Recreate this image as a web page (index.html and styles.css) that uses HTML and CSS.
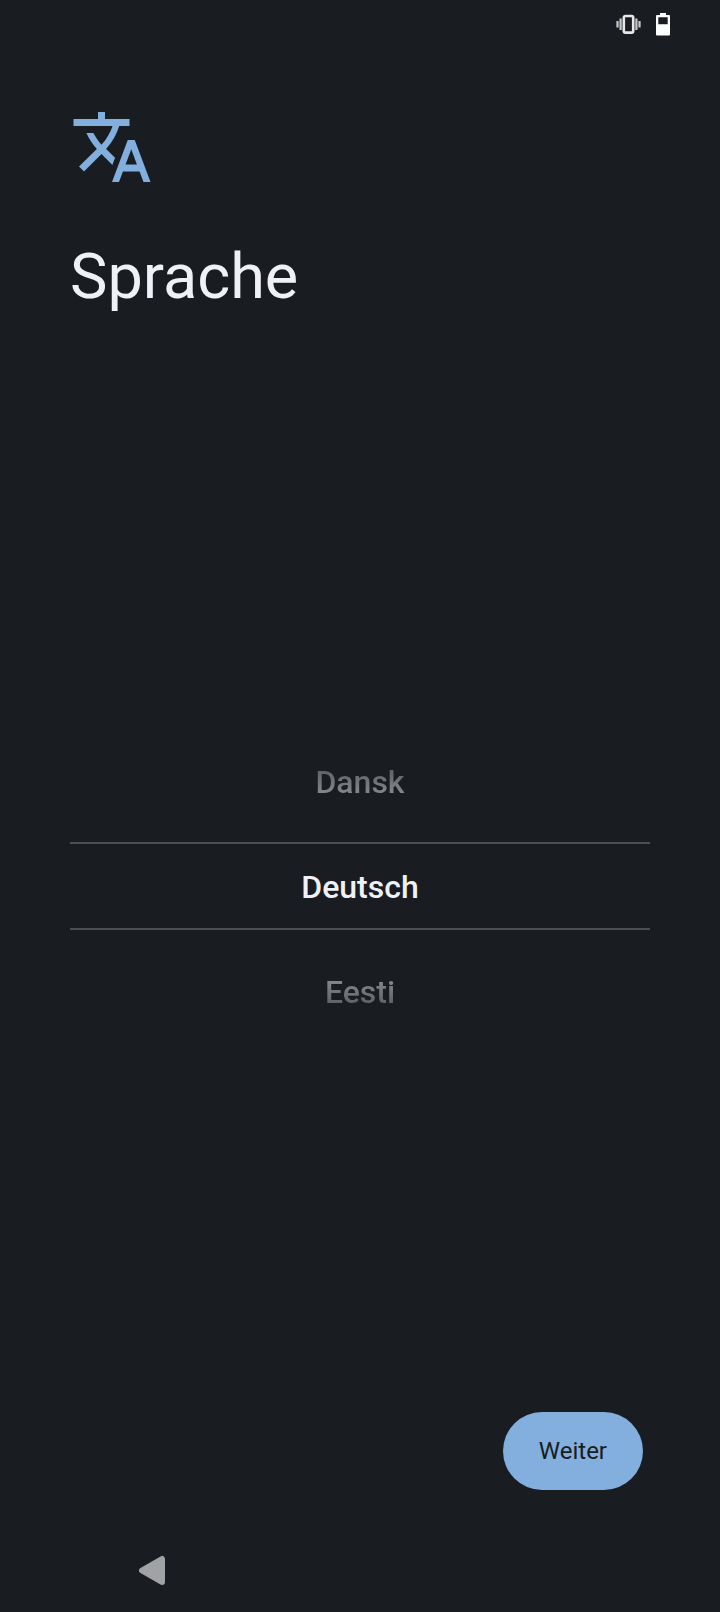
FILE: index.html
```html
<!DOCTYPE html>
<html lang="de">
<head>
<meta charset="utf-8">
<meta name="viewport" content="width=device-width, initial-scale=1">
<title>Sprache</title>
<link rel="stylesheet" href="styles.css">
</head>
<body>
<div class="screen">
  <div class="status-bar">
    <svg class="status-icon" width="26" height="24" viewBox="0 0 26 24" aria-label="Vibration" role="img">
      <rect x="7.800" y="4" width="9.400" height="16.600" rx="1.600" fill="none" stroke="#e8e8e8" stroke-width="2.600"/>
      <path d="M4.600 6.600v11.400M20.400 6.600v11.400M1.500 9v6.600M23.500 9v6.600" fill="none" stroke="#c4c5c6" stroke-width="2.300"/>
    </svg>
    <svg class="status-icon" width="14" height="24" viewBox="0 0 14 24" aria-label="Akku" role="img">
      <path fill="#fff" fill-rule="evenodd" d="M4 1h6v2h3a1 1 0 0 1 1 1v18.500a1 1 0 0 1-1 1H1a1 1 0 0 1-1-1V4a1 1 0 0 1 1-1h3zM2.300 5.300v7h9.400v-7z"/>
    </svg>
  </div>
  <header class="header">
    <svg class="header-icon" viewBox="0 0 24 24" aria-hidden="true">
      <path d="M12.870 15.070l-2.540-2.510.03-.03c1.740-1.940 2.980-4.170 3.710-6.530H17V4h-7V2H8v2H1v1.990h11.170C11.500 7.920 10.440 9.750 9 11.350 8.070 10.320 7.300 9.190 6.690 8h-2c.73 1.630 1.730 3.170 2.980 4.560l-5.090 5.020L4 19l5-5 3.110 3.110.76-2.040zM18.500 10h-2L12 22h2l1.120-3h4.750L21 22h2l-4.500-12zm-2.620 7l1.620-4.330L19.120 17h-3.240z"/>
    </svg>
    <h1 class="title">Sprache</h1>
  </header>
  <main class="content">
    <div class="picker" role="radiogroup" aria-label="Sprache">
      <label class="option option-before"><input class="option-input" type="radio" name="language"><span class="option-text">Dansk</span></label>
      <label class="option option-selected"><input class="option-input" type="radio" name="language" checked><span class="option-text">Deutsch</span></label>
      <label class="option option-after"><input class="option-input" type="radio" name="language"><span class="option-text">Eesti</span></label>
    </div>
  </main>
  <footer class="actions">
    <button class="next" type="button">Weiter</button>
  </footer>
  <nav class="nav-bar">
    <button class="back" type="button" aria-label="Zurück">
      <svg width="28" height="30" viewBox="0 0 28 30" aria-hidden="true">
        <path d="M4 15.500L24 4v23z" fill="#a1a2a3" stroke="#a1a2a3" stroke-width="6" stroke-linejoin="round"/>
      </svg>
    </button>
  </nav>
</div>
</body>
</html>
```
FILE: styles.css
```css
* { box-sizing: border-box; }

body {
  margin: 0;
  background: #191c20;
  color: #f0f0f7;
  font-family: Roboto, "Liberation Sans", sans-serif;
}

.screen {
  display: flex;
  flex-direction: column;
  min-height: 100vh;
}

.status-bar {
  display: flex;
  justify-content: flex-end;
  align-items: center;
  gap: 14px;
  height: 48px;
  padding-right: 50px;
}

.status-icon { display: block; }

.header { padding: 57px 70px 43px; }

.header-icon {
  display: block;
  width: 84px;
  height: 84px;
  fill: #82afde;
}

.title {
  margin: 48px 0 0;
  font-size: 63px;
  font-weight: 400;
  line-height: 80px;
}

.content {
  display: flex;
  flex: 1;
  align-items: center;
  padding: 0 70px;
}

.picker {
  display: flex;
  flex: 1;
  flex-direction: column;
  gap: 21px;
}

.option {
  position: relative;
  display: flex;
  justify-content: center;
  align-items: center;
  height: 80px;
  padding-top: 2px;
  font-size: 32px;
  font-weight: 500;
  line-height: 40px;
}

.option-input {
  position: absolute;
  margin: 0;
  opacity: 0;
}

.option-selected {
  height: 88px;
  border: solid #4b4f52;
  border-width: 2px 0;
}

.option-before .option-text,
.option-after .option-text {
  background: linear-gradient(#5e6165 20%, #85888c 80%);
  background-clip: text;
  -webkit-background-clip: text;
  color: transparent;
}

.option-after .option-text {
  background-image: linear-gradient(#85888c 20%, #5e6165 80%);
}

.actions {
  display: flex;
  justify-content: flex-end;
  padding: 0 77px 38px;
}

.next {
  min-width: 140px;
  height: 78px;
  padding: 0 36px;
  border: 0;
  border-radius: 39px;
  background: #82afde;
  color: #191c20;
  font: 400 24px Roboto, "Liberation Sans", sans-serif;
}

.nav-bar {
  display: flex;
  align-items: center;
  height: 84px;
  padding-left: 138px;
}

.back {
  display: flex;
  padding: 0;
  border: 0;
  background: none;
}
```
